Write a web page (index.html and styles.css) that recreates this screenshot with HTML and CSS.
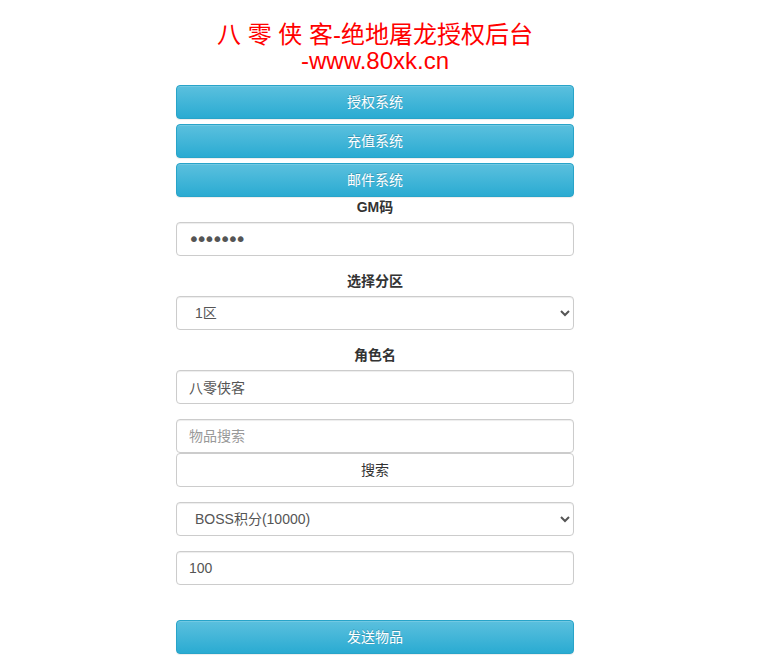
FILE: index.html
```html
<!DOCTYPE html>
<html lang="zh-CN">
<head>
<meta charset="utf-8">
<title>八零侠客-绝地屠龙授权后台</title>
<link rel="stylesheet" href="styles.css">
</head>
<body>
<div class="wrap">
  <div class="panel">
    <h3 class="title">八 零 侠 客-绝地屠龙授权后台<br>-www.80xk.cn</h3>
    <div class="nav">
      <a class="btn btn-info">授权系统</a>
      <a class="btn btn-info">充值系统</a>
      <a class="btn btn-info">邮件系统</a>
    </div>
    <form class="form">
      <div class="form-group">
        <label class="label">GM码</label>
        <input class="form-control pwd" type="password" value="1234567">
      </div>
      <div class="form-group">
        <label class="label">选择分区</label>
        <select class="form-control select"><option>1区</option></select>
      </div>
      <div class="form-group">
        <label class="label">角色名</label>
        <input class="form-control" type="text" value="八零侠客">
      </div>
      <div class="form-group">
        <input class="form-control" type="text" placeholder="物品搜索">
        <button type="button" class="btn btn-default">搜索</button>
      </div>
      <div class="form-group">
        <select class="form-control select"><option>BOSS积分(10000)</option></select>
      </div>
      <div class="form-group">
        <input class="form-control" type="text" value="100">
      </div>
      <div class="form-group">
        <label class="label empty"></label>
        <button type="button" class="btn btn-info">发送物品</button>
      </div>
    </form>
  </div>
</div>
</body>
</html>
```
FILE: styles.css
```css
html, body {
  margin: 0;
  padding: 0;
  background: #fff;
}
body {
  font-family: "Liberation Sans", Arial, "Noto Sans CJK SC", sans-serif;
  font-size: 14px;
  line-height: 20px;
  color: #333;
}
.wrap {
  width: 750px;
}
.panel {
  width: 398px;
  margin: 0 auto;
}
.title {
  margin: 0;
  height: 85px;
  padding-top: 22px;
  box-sizing: border-box;
  font-size: 24px;
  font-weight: normal;
  line-height: 26px;
  color: #ff0000;
  text-align: center;
  white-space: nowrap;
}
.nav {
  display: flex;
  flex-direction: column;
  gap: 5px;
}
.btn {
  display: block;
  box-sizing: border-box;
  width: 100%;
  height: 34px;
  padding: 6px 12px;
  font-family: inherit;
  font-size: 14px;
  line-height: 20px;
  text-align: center;
  border: 1px solid transparent;
  border-radius: 4px;
  cursor: pointer;
}
.btn-info {
  color: #fff;
  background-color: #5bc0de;
  background-image: linear-gradient(to bottom, #5bc0de 0%, #2aabd2 100%);
  border-color: #28a4c9;
  box-shadow: inset 0 1px 0 rgba(255,255,255,.15), 0 1px 1px rgba(0,0,0,.075);
  text-shadow: 0 -1px 0 rgba(0,0,0,.2);
}
.btn-default {
  color: #333;
  background: #fff;
  border-color: #ccc;
}
.form-group {
  margin-bottom: 15px;
}
.label {
  display: block;
  height: 20px;
  margin-bottom: 5px;
  font-weight: bold;
  text-align: center;
}
.label.empty {
  margin-bottom: 0;
}
.form-control {
  display: block;
  box-sizing: border-box;
  width: 100%;
  height: 34px;
  margin: 0;
  padding: 6px 12px;
  font-family: inherit;
  font-size: 14px;
  line-height: 20px;
  color: #555;
  background: #fff;
  border: 1px solid #ccc;
  border-radius: 4px;
  box-shadow: inset 0 1px 1px rgba(0,0,0,.075);
}
.form-control::placeholder {
  color: #999;
}
.pwd {
  font-family: "DejaVu Sans", sans-serif;
  font-size: 20px;
  letter-spacing: -4px;
  padding-left: 11px;
}
.select {
  padding-left: 14px;
}
```
